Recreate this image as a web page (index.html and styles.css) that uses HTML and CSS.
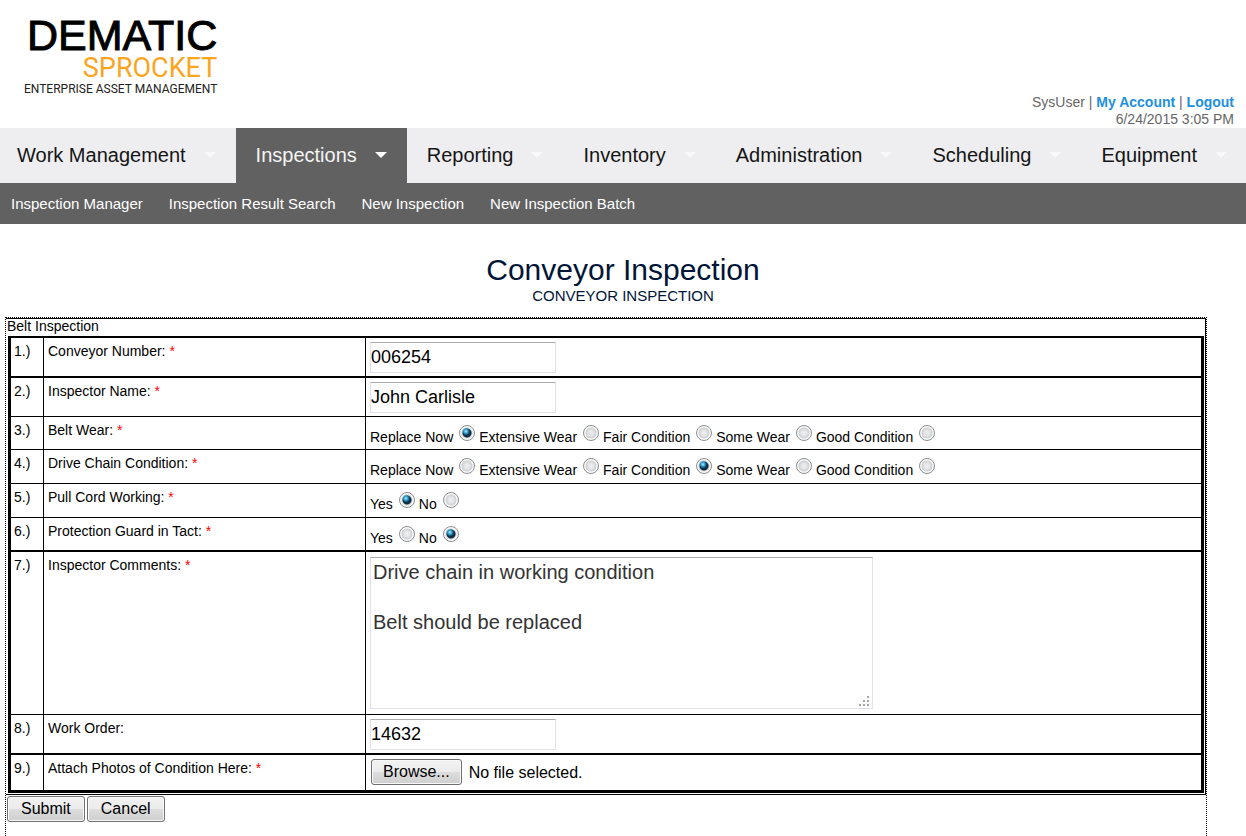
FILE: index.html
```html
<!DOCTYPE html>
<html lang="en">
<head>
  <meta charset="UTF-8">
  <meta name="viewport" content="width=device-width, initial-scale=1.0">
  <title>Conveyor Inspection</title>
  <link rel="stylesheet" href="styles.css">
</head>
<body>
  <header class="header">
    <div class="logo">
      <div class="logo-name">DEMATIC</div>
      <div class="logo-product">SPROCKET</div>
      <div class="logo-tag">ENTERPRISE ASSET MANAGEMENT</div>
    </div>
    <div class="account">
      <div>SysUser | <a href="#">My Account</a> | <a href="#">Logout</a></div>
      <div>6/24/2015 3:05 PM</div>
    </div>
  </header>

  <nav class="main-nav">
    <a href="#">Work Management</a>
    <a href="#" class="active">Inspections</a>
    <a href="#">Reporting</a>
    <a href="#">Inventory</a>
    <a href="#">Administration</a>
    <a href="#">Scheduling</a>
    <a href="#">Equipment</a>
  </nav>
  <nav class="sub-nav">
    <a href="#">Inspection Manager</a>
    <a href="#">Inspection Result Search</a>
    <a href="#">New Inspection</a>
    <a href="#">New Inspection Batch</a>
  </nav>

  <div class="title">
    <h1>Conveyor Inspection</h1>
    <p>CONVEYOR INSPECTION</p>
  </div>

  <form class="inspection">
    <div class="section">
      <h2>Belt Inspection</h2>
      <table>
        <tr class="thick">
          <td class="num">1.)</td>
          <td class="question"><label for="conveyor">Conveyor Number: <em>*</em></label></td>
          <td><input type="text" class="text" id="conveyor" value="006254"></td>
        </tr>
        <tr>
          <td class="num">2.)</td>
          <td class="question"><label for="inspector">Inspector Name: <em>*</em></label></td>
          <td><input type="text" class="text" id="inspector" value="John Carlisle"></td>
        </tr>
        <tr>
          <td class="num">3.)</td>
          <td class="question">Belt Wear: <em>*</em></td>
          <td class="choices tight">
            <div class="options">
              <label><span>Replace Now</span><input type="radio" name="belt" checked></label>
              <label><span>Extensive Wear</span><input type="radio" name="belt"></label>
              <label><span>Fair Condition</span><input type="radio" name="belt"></label>
              <label><span>Some Wear</span><input type="radio" name="belt"></label>
              <label><span>Good Condition</span><input type="radio" name="belt"></label>
            </div>
          </td>
        </tr>
        <tr>
          <td class="num">4.)</td>
          <td class="question">Drive Chain Condition: <em>*</em></td>
          <td class="choices">
            <div class="options">
              <label><span>Replace Now</span><input type="radio" name="chain"></label>
              <label><span>Extensive Wear</span><input type="radio" name="chain"></label>
              <label><span>Fair Condition</span><input type="radio" name="chain" checked></label>
              <label><span>Some Wear</span><input type="radio" name="chain"></label>
              <label><span>Good Condition</span><input type="radio" name="chain"></label>
            </div>
          </td>
        </tr>
        <tr>
          <td class="num">5.)</td>
          <td class="question">Pull Cord Working: <em>*</em></td>
          <td class="choices">
            <div class="options">
              <label><span>Yes</span><input type="radio" name="cord" checked></label>
              <label><span>No</span><input type="radio" name="cord"></label>
            </div>
          </td>
        </tr>
        <tr class="thick">
          <td class="num">6.)</td>
          <td class="question">Protection Guard in Tact: <em>*</em></td>
          <td class="choices tight">
            <div class="options">
              <label><span>Yes</span><input type="radio" name="guard"></label>
              <label><span>No</span><input type="radio" name="guard" checked></label>
            </div>
          </td>
        </tr>
        <tr>
          <td class="num">7.)</td>
          <td class="question"><label for="comments">Inspector Comments: <em>*</em></label></td>
          <td class="comments">
            <div class="comments-box">
              <textarea id="comments">Drive chain in working condition

Belt should be replaced</textarea>
              <svg class="grip" width="12" height="12" viewBox="0 0 12 12" fill="#a5a5a5">
                <path d="M8 0h2v2H8zM4 4h2v2H4zM8 4h2v2H8zM0 8h2v2H0zM4 8h2v2H4zM8 8h2v2H8z"/>
              </svg>
            </div>
          </td>
        </tr>
        <tr class="thick">
          <td class="num">8.)</td>
          <td class="question"><label for="order">Work Order:</label></td>
          <td><input type="text" class="text" id="order" value="14632"></td>
        </tr>
        <tr>
          <td class="num">9.)</td>
          <td class="question">Attach Photos of Condition Here: <em>*</em></td>
          <td>
            <div class="upload">
              <input type="file" id="photos">
              <label for="photos" class="button">Browse...</label>
              <span>No file selected.</span>
            </div>
          </td>
        </tr>
      </table>
    </div>
    <div class="actions">
      <button type="submit" class="button">Submit</button>
      <button type="button" class="button">Cancel</button>
    </div>
  </form>
</body>
</html>
```

FILE: styles.css
```css
* {
  margin: 0;
  padding: 0;
  box-sizing: border-box;
}

body {
  min-height: 100vh;
  display: flex;
  flex-direction: column;
  overflow-x: hidden;
  background: #fff;
  color: #000;
  font-family: "Liberation Sans", Arial, sans-serif;
  font-size: 14px;
  line-height: 17px;
}

a {
  text-decoration: none;
}

/* header */
.header {
  display: flex;
  justify-content: space-between;
  align-items: flex-end;
  padding: 14px 12px 0 24px;
  height: 128px;
}

.logo {
  align-self: flex-start;
  display: flex;
  flex-direction: column;
  align-items: flex-end;
  white-space: nowrap;
}

.logo-name {
  font-size: 43px;
  line-height: 42px;
  -webkit-text-stroke: 1px #000;
}

.logo-product {
  font-family: Roboto, sans-serif;
  font-size: 27px;
  line-height: 24px;
  color: #fba51f;
}

.logo-tag {
  font-family: Roboto, sans-serif;
  font-size: 12px;
  line-height: 18px;
  color: #222;
}

.account {
  text-align: right;
  color: #666;
}

.account a {
  color: #1e90dd;
  font-weight: bold;
}

/* navigation */
.main-nav {
  display: flex;
  height: 55px;
  background: #eeeef0;
  overflow: hidden;
}

.main-nav a {
  display: flex;
  align-items: center;
  flex-shrink: 0;
  gap: 18px;
  padding: 0 20px 1px;
  color: #151515;
  font-size: 20px;
  line-height: 24px;
}

.main-nav a:first-child {
  padding-left: 17px;
}

.main-nav a::after {
  content: "";
  border: 6px solid transparent;
  border-top-color: #f8f8f8;
  border-bottom: 0;
}

.main-nav .active {
  background: #616161;
  color: #f4f4f4;
}

.main-nav .active::after {
  border-top-color: #fff;
}

.sub-nav {
  display: flex;
  align-items: center;
  gap: 26px;
  height: 41px;
  padding: 0 11px;
  background: #616161;
  font-size: 15px;
}

.sub-nav a {
  color: #fff;
}

.title {
  padding: 29px 0 12px;
  text-align: center;
  color: #001437;
}

.title h1 {
  font-size: 30px;
  line-height: 34px;
  font-weight: normal;
}

.title p {
  font-size: 15px;
  line-height: 18px;
}

/* inspection form */
.inspection {
  flex: 1;
  margin: 0 39px 0 5px;
  border: 1px dotted #000;
  border-bottom: 0;
}

.section {
  padding: 0 1px 1px;
  border: 1px solid #000;
  border-left: 0;
}

.section h2 {
  padding-bottom: 2px;
  font-size: 14px;
  line-height: 15px;
  font-weight: normal;
}

table {
  width: calc(100% - 1px);
  margin-left: 1px;
  border: 3px solid #000;
  border-top-width: 2px;
  border-spacing: 0;
}

td {
  padding: 4px 4px 3px;
  border-bottom: 1px solid #000;
  vertical-align: top;
}

.thick td {
  border-bottom-width: 2px;
}

tr:last-child td {
  border-bottom: 0;
}

.num,
.question {
  padding: 5px 4px;
  border-right: 1px solid #000;
}

.num {
  width: 33px;
  padding: 5px 3px;
}

.question {
  width: 322px;
}

em {
  color: #f00;
  font-style: normal;
}

.text {
  display: block;
  width: 186px;
  height: 31px;
  border: 1px solid #e2e3ea;
  border-top-color: #abadb3;
  font-family: inherit;
  font-size: 18px;
}

.choices {
  padding: 8px 4px 4px;
}

.tight {
  padding-bottom: 3px;
}

.options {
  display: flex;
  gap: 4px;
}

.options label {
  display: flex;
  align-items: flex-start;
  gap: 6px;
}

.options span {
  padding-top: 4px;
}

.options input {
  appearance: none;
  width: 16px;
  height: 16px;
  border: 1px solid #8e8f8f;
  border-radius: 50%;
  background: radial-gradient(circle, #f0f0f0 0, #e2e4e6 3px, #cdd0d3 5px, #fafafa 6px);
}

.options input:checked {
  background: radial-gradient(circle at 42% 38%, #b8ecfa 0, #2e9fd0 2px, transparent 4px), radial-gradient(circle, #0b4468 0, #10283c 4px, #d5d8da 5px, #fafafa 6px);
}

.comments {
  padding: 5px 4px;
}

.comments-box {
  position: relative;
  width: 503px;
}

textarea {
  display: block;
  width: 100%;
  height: 152px;
  padding: 2px;
  border: 1px solid #e2e3ea;
  border-top-color: #abadb3;
  color: #333;
  font-family: inherit;
  font-size: 20px;
  line-height: 25px;
  resize: none;
}

.grip {
  position: absolute;
  right: 2px;
  bottom: 1px;
}

.upload {
  display: flex;
  align-items: center;
  gap: 7px;
  padding: 0 1px 2px;
  font-size: 16px;
}

.upload input {
  position: absolute;
  width: 1px;
  height: 1px;
  opacity: 0;
}

.button {
  height: 26px;
  padding: 0 11px;
  border: 1px solid #707070;
  border-radius: 3px;
  background: linear-gradient(#f2f2f2, #ebebeb 50%, #dddddd 50%, #cfcfcf);
  box-shadow: inset 0 0 0 1px #f8f8f8;
  color: #000;
  font-family: inherit;
  font-size: 16px;
  line-height: 24px;
}

.actions {
  display: flex;
  gap: 2px;
  padding: 1px;
}

.actions .button {
  padding: 0 13px;
}
```
